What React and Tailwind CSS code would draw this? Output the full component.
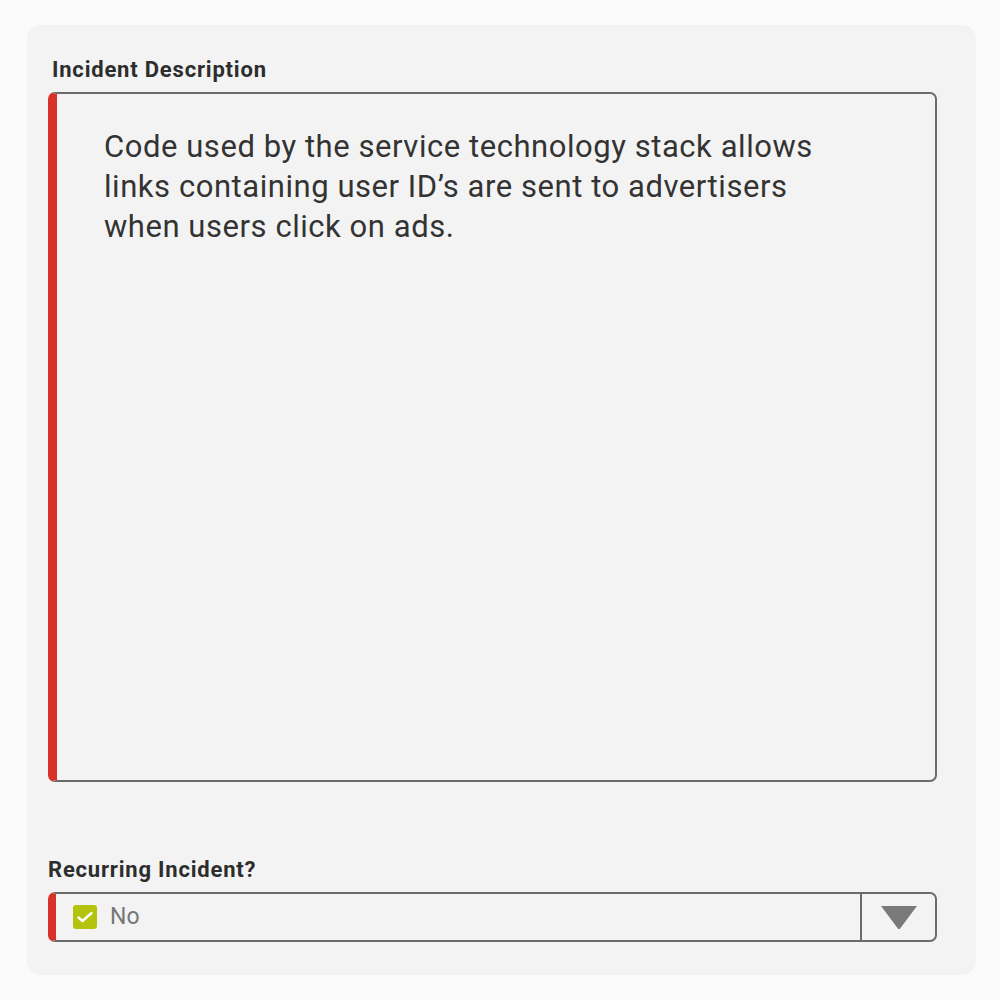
export default function App() {
  return (
    <div className="w-[1000px] h-[1000px] bg-[#fbfbfb] pt-[25px] pl-[27px]" style={{ fontFamily: 'Roboto, "Liberation Sans", sans-serif' }}>
      <div className="w-[949px] h-[950px] bg-[#f3f3f3] rounded-[14px] pt-[33px] pl-[21px] pr-[39px] flex flex-col">
        <div className="ml-[4px] h-[24px] leading-[24px] text-[22px] font-bold text-[#2d2d2d] tracking-[0.8px]">Incident Description</div>
        <div className="mt-[10px] h-[690px] border-2 border-l-[9px] border-[#6b6b6b] border-l-[#d8312a] rounded-[7px] pt-[33px] pl-[47px]">
          <p className="text-[31px] leading-[40px] text-[#333333] tracking-[0.55px]">
            Code used by the service technology stack allows<br />
            links containing user ID’s are sent to advertisers<br />
            when users click on ads.
          </p>
        </div>
        <div className="mt-[76px] h-[24px] leading-[24px] text-[22px] font-bold text-[#2d2d2d] tracking-[0.8px]">Recurring Incident?</div>
        <div className="mt-[10px] h-[50px] border-2 border-l-[8px] border-[#6b6b6b] border-l-[#d8312a] rounded-[7px] flex items-stretch">
          <div className="flex-1 flex items-center pl-[17px] gap-[13px]">
            <div className="w-[24px] h-[24px] rounded-[3px] bg-[#b4c30e] flex items-center justify-center">
              <svg width="18" height="18" viewBox="0 0 18 18" fill="none">
                <path d="M2.5 9.5l4 3.5L15.5 5" stroke="#ffffff" strokeWidth="2.4" strokeLinecap="round" strokeLinejoin="round" />
              </svg>
            </div>
            <span className="text-[23px] text-[#777777]">No</span>
          </div>
          <div className="w-[75px] border-l-2 border-[#6b6b6b] flex items-center justify-center">
            <svg width="36" height="24" viewBox="0 0 36 24">
              <polygon points="0,1 36,1 18,25" fill="#7a7a7a" />
            </svg>
          </div>
        </div>
      </div>
    </div>
  );
}
